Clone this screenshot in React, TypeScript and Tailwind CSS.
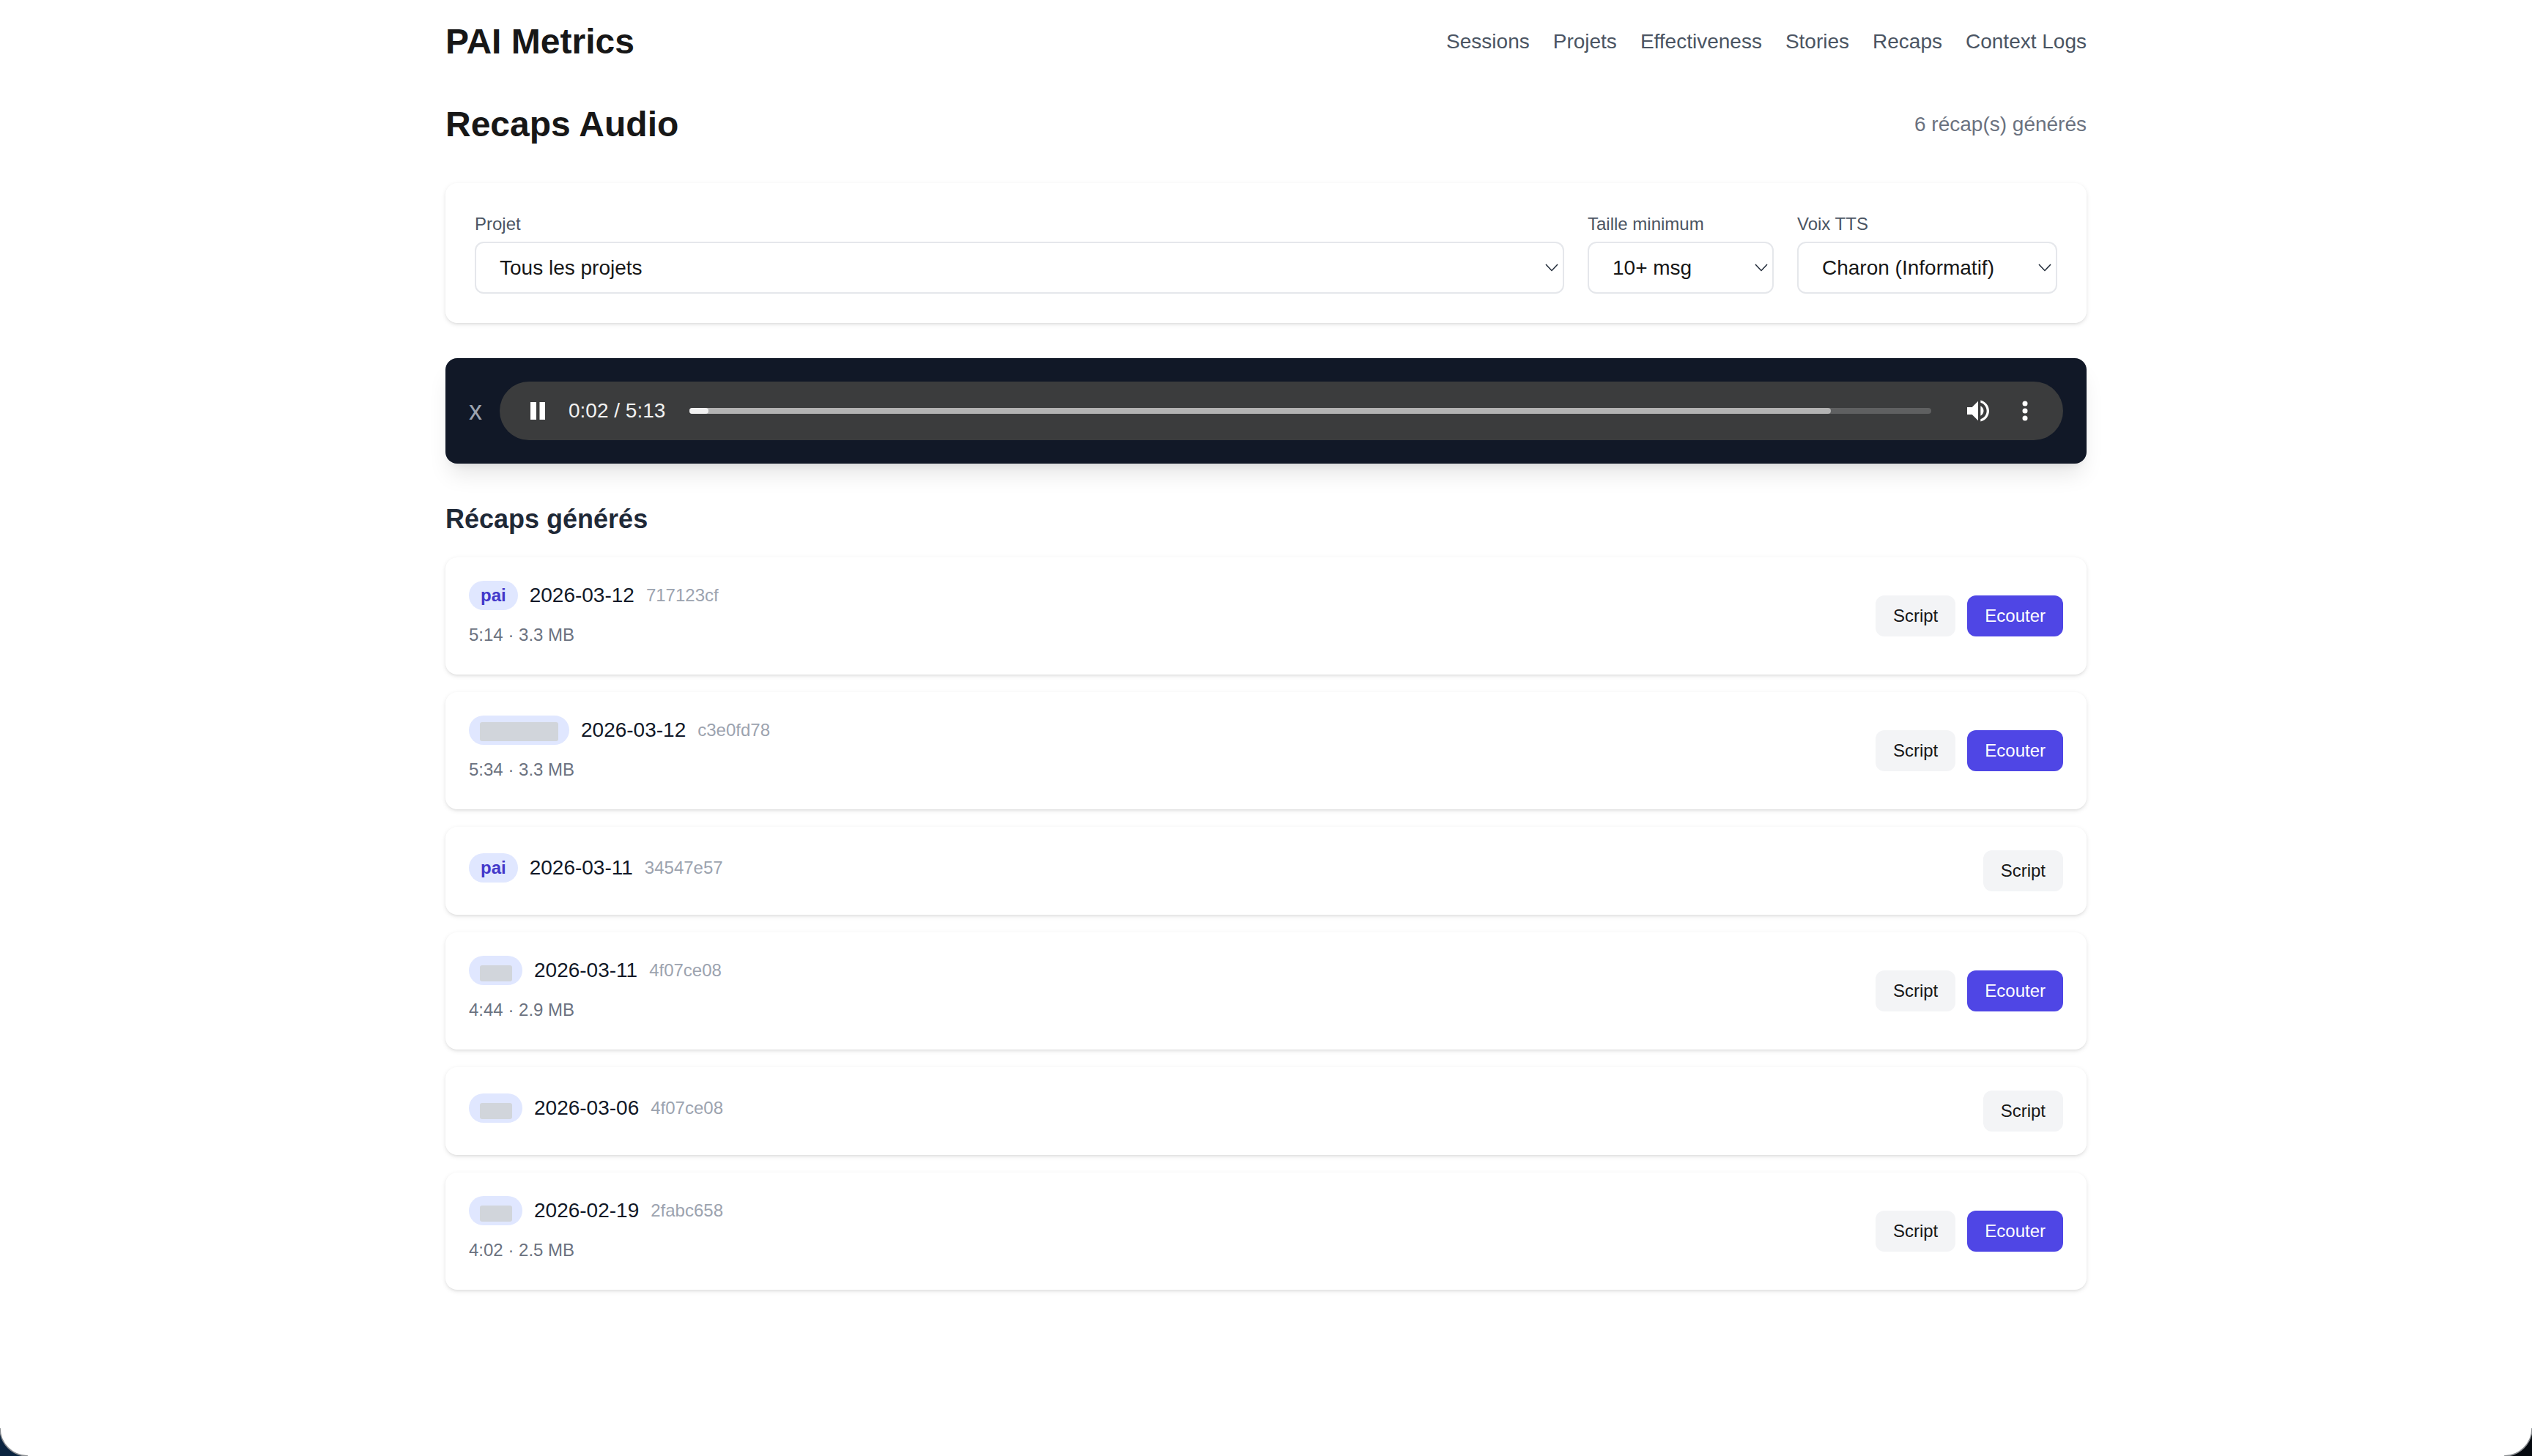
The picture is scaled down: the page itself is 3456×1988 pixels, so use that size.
import { useState } from 'react';

// Everything on this page is sized for a 2x capture of a 1728px wide layout.

const CARD_SHADOW = 'shadow-[0_2px_6px_0_rgba(0,0,0,0.1),0_2px_4px_-2px_rgba(0,0,0,0.1)]';

const NAV_LINKS = ['Sessions', 'Projets', 'Effectiveness', 'Stories', 'Recaps', 'Context Logs'];

interface Recap {
  /** Project name, null when the name is masked in the capture */
  project: string | null;
  /** Width of the masked name */
  maskWidth?: 'wide' | 'narrow';
  date: string;
  hash: string;
  meta?: string;
}

const RECAPS: Recap[] = [
  { project: 'pai', date: '2026-03-12', hash: '717123cf', meta: '5:14 · 3.3 MB' },
  { project: null, maskWidth: 'wide', date: '2026-03-12', hash: 'c3e0fd78', meta: '5:34 · 3.3 MB' },
  { project: 'pai', date: '2026-03-11', hash: '34547e57' },
  { project: null, maskWidth: 'narrow', date: '2026-03-11', hash: '4f07ce08', meta: '4:44 · 2.9 MB' },
  { project: null, maskWidth: 'narrow', date: '2026-03-06', hash: '4f07ce08' },
  { project: null, maskWidth: 'narrow', date: '2026-02-19', hash: '2fabc658', meta: '4:02 · 2.5 MB' },
];

function Chevron() {
  return (
    <svg
      viewBox="0 0 18 11"
      fill="none"
      stroke="#1f2937"
      strokeWidth="1.5"
      className="pointer-events-none absolute right-[8px] top-[30px] h-[11px] w-[18px]"
    >
      <path d="M1 1l8 8.5L17 1" />
    </svg>
  );
}

interface FieldProps {
  label: string;
  options: string[];
  className: string;
}

function Field({ label, options, className }: FieldProps) {
  const [value, setValue] = useState(options[0]);

  return (
    <div className={className}>
      <label className="mb-2 block text-[24px] leading-8 text-[#4b5563]">{label}</label>
      <div className="relative">
        <select
          value={value}
          onChange={(e) => setValue(e.target.value)}
          className="block h-[71px] w-full appearance-none rounded-xl border-2 border-[#e5e7eb] bg-white pl-[32px] pr-10 text-[28px] text-[#171717]"
        >
          {options.map((o) => (
            <option key={o}>{o}</option>
          ))}
        </select>
        <Chevron />
      </div>
    </div>
  );
}

function AudioPlayer() {
  return (
    <div className="mt-12 flex h-[144px] items-center gap-6 rounded-2xl bg-[#111827] p-8 shadow-[0_20px_30px_-6px_rgba(0,0,0,0.1),0_8px_12px_-8px_rgba(0,0,0,0.1)]">
      <button className="w-[18px] text-[36px] leading-none text-[#9ca3af]">x</button>
      <div className="flex h-20 flex-1 items-center rounded-full bg-[#3b3c3d] pl-[42px] pr-8">
        <svg viewBox="0 0 20 24" fill="#ffffff" className="h-6 w-5 shrink-0">
          <rect x="0" y="0" width="8" height="24" />
          <rect x="12.5" y="0" width="7.5" height="24" />
        </svg>
        <span className="ml-8 w-[132px] shrink-0 whitespace-nowrap text-[28px] leading-8 text-[#f1f1f1]">
          0:02 / 5:13
        </span>
        <div className="ml-[33px] h-2 flex-1 rounded-full bg-[#5f6061]">
          <div className="h-full w-[1558px] rounded-full bg-[#b3b3b3]">
            <div className="h-full w-[26px] rounded-full bg-[#f1f1f1]" />
          </div>
        </div>
        <svg viewBox="0 0 24 24" fill="#ffffff" className="ml-11 h-10 w-10 shrink-0">
          <path d="M3 9v6h4l5 5V4L7 9H3zm13.5 3c0-1.77-1.02-3.29-2.5-4.03v8.05c1.48-.73 2.5-2.25 2.5-4.02zM14 3.23v2.06c2.89.86 5 3.54 5 6.71s-2.11 5.85-5 6.71v2.06c4.01-.91 7-4.49 7-8.77s-2.99-7.86-7-8.77z" />
        </svg>
        <svg viewBox="0 0 40 40" fill="#ffffff" className="ml-6 h-10 w-10 shrink-0">
          <circle cx="20" cy="10" r="3.5" />
          <circle cx="20" cy="20" r="3.5" />
          <circle cx="20" cy="30" r="3.5" />
        </svg>
      </div>
    </div>
  );
}

function ProjectBadge({ recap }: { recap: Recap }) {
  if (recap.project) {
    return (
      <span className="rounded-full bg-[#e0e7ff] px-4 py-1 text-[24px] font-bold leading-8 text-[#4338ca]">
        {recap.project}
      </span>
    );
  }
  if (recap.maskWidth === 'wide') {
    return (
      <span className="flex h-10 items-end rounded-full bg-[#e0e7ff] pb-[5px] pl-[15px] pr-[15px]">
        <span className="block h-[26px] w-[107px] rounded-[3px] bg-[#d1d5db]" />
      </span>
    );
  }
  return (
    <span className="flex h-10 items-end rounded-full bg-[#e0e7ff] pb-[5px] pl-[15px] pr-[14px]">
      <span className="block h-[22px] w-[44px] rounded-[3px] bg-[#d1d5db]" />
    </span>
  );
}

function RecapCard({ recap }: { recap: Recap }) {
  return (
    <div className={`flex items-center justify-between rounded-2xl bg-white p-8 ${CARD_SHADOW}`}>
      <div>
        <div className="flex items-center gap-4 pb-2">
          <ProjectBadge recap={recap} />
          <span className="text-[28px] leading-10 text-[#111827]">{recap.date}</span>
          <span className="text-[24px] leading-10 text-[#9ca3af]">{recap.hash}</span>
        </div>
        {recap.meta && <div className="mb-[6px] mt-[10px] text-[24px] leading-8 text-[#6b7280]">{recap.meta}</div>}
      </div>
      <div className="flex gap-4">
        <button className="h-14 rounded-xl bg-[#f3f4f6] px-6 text-[24px] leading-8 text-[#171717]">Script</button>
        {recap.meta && (
          <button className="h-14 rounded-xl bg-[#4f46e5] px-6 text-[24px] leading-8 text-white">Ecouter</button>
        )}
      </div>
    </div>
  );
}

// Rounded bottom corners of the macOS window, the desktop shows behind them
function WindowCorner({ side }: { side: 'left' | 'right' }) {
  const fill = side === 'left' ? '#0b2440' : '#05090f';
  return (
    <svg
      viewBox="0 0 38 38"
      className={`absolute bottom-0 h-[38px] w-[38px] ${side === 'left' ? 'left-0' : 'right-0 -scale-x-100'}`}
    >
      <path d="M0 0C0 21 17 38 38 38H0Z" fill={fill} />
      <path d="M0 0C0 21 17 38 38 38" fill="none" stroke="#8a8d91" strokeWidth="1.5" />
    </svg>
  );
}

export default function App() {
  return (
    <div className="relative h-[1988px] w-[3456px] overflow-hidden bg-white font-['Liberation_Sans',Arial,sans-serif] text-[#171717]">
      <div className="mx-auto w-[2240px] pt-[25px]">
        <header className="flex h-16 items-center justify-between">
          <h1 className="text-[48px] font-bold leading-[64px]">PAI Metrics</h1>
          <nav className="flex gap-8 text-[28px] leading-10 text-[#4b5563]">
            {NAV_LINKS.map((link) => (
              <a key={link}>{link}</a>
            ))}
          </nav>
        </header>

        <div className="mt-[49px] flex h-16 items-center justify-between">
          <h2 className="text-[48px] font-bold leading-[64px]">Recaps Audio</h2>
          <span className="text-[28px] leading-10 text-[#6b7280]">6 récap(s) générés</span>
        </div>

        <div className={`mt-12 flex gap-8 rounded-2xl bg-white p-10 ${CARD_SHADOW}`}>
          <Field label="Projet" options={['Tous les projets']} className="flex-1" />
          <Field label="Taille minimum" options={['10+ msg']} className="w-[254px]" />
          <Field label="Voix TTS" options={['Charon (Informatif)']} className="w-[355px]" />
        </div>

        <AudioPlayer />

        <h3 className="mt-12 text-[36px] font-bold leading-[56px] text-[#1f2937]">Récaps générés</h3>
        <div className="mt-6 flex flex-col gap-6">
          {RECAPS.map((recap) => (
            <RecapCard key={recap.date + recap.hash} recap={recap} />
          ))}
        </div>
      </div>

      <WindowCorner side="left" />
      <WindowCorner side="right" />
    </div>
  );
}
